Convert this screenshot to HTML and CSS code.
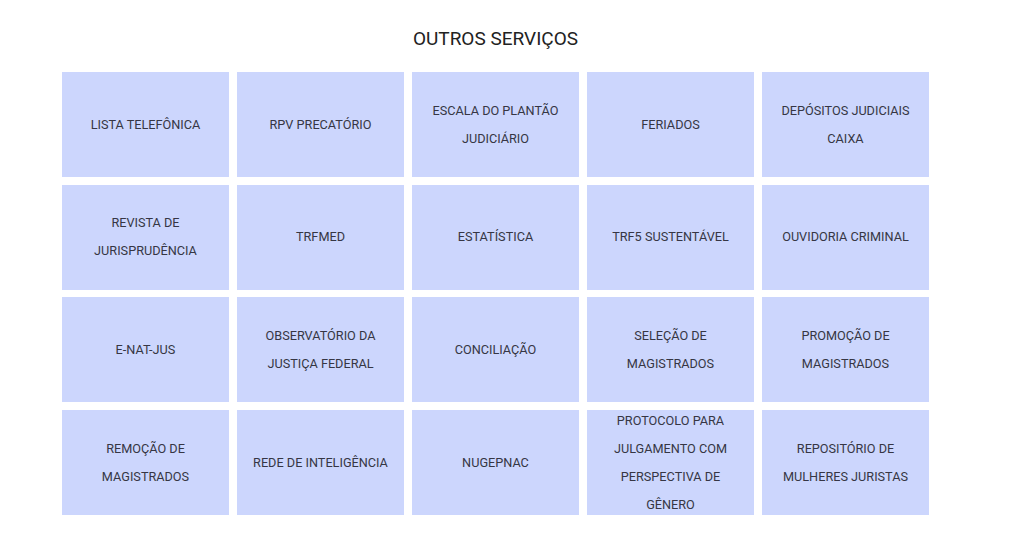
FILE: index.html
```html
<!DOCTYPE html>
<html lang="pt-BR">
<head>
<meta charset="utf-8">
<title>Outros Serviços</title>
<link rel="stylesheet" href="styles.css">
</head>
<body>
<section class="services">
  <h2 class="services-title">OUTROS SERVIÇOS</h2>
  <div class="services-grid">
    <a class="tile" href="#">LISTA TELEFÔNICA</a>
    <a class="tile" href="#">RPV PRECATÓRIO</a>
    <a class="tile" href="#">ESCALA DO PLANTÃO JUDICIÁRIO</a>
    <a class="tile" href="#">FERIADOS</a>
    <a class="tile" href="#">DEPÓSITOS JUDICIAIS CAIXA</a>
    <a class="tile" href="#">REVISTA DE JURISPRUDÊNCIA</a>
    <a class="tile" href="#">TRFMED</a>
    <a class="tile" href="#">ESTATÍSTICA</a>
    <a class="tile" href="#">TRF5 SUSTENTÁVEL</a>
    <a class="tile" href="#">OUVIDORIA CRIMINAL</a>
    <a class="tile" href="#">E-NAT-JUS</a>
    <a class="tile" href="#">OBSERVATÓRIO DA JUSTIÇA FEDERAL</a>
    <a class="tile" href="#">CONCILIAÇÃO</a>
    <a class="tile" href="#">SELEÇÃO DE MAGISTRADOS</a>
    <a class="tile" href="#">PROMOÇÃO DE MAGISTRADOS</a>
    <a class="tile" href="#">REMOÇÃO DE MAGISTRADOS</a>
    <a class="tile" href="#">REDE DE INTELIGÊNCIA</a>
    <a class="tile" href="#">NUGEPNAC</a>
    <a class="tile" href="#">PROTOCOLO PARA JULGAMENTO COM PERSPECTIVA DE GÊNERO</a>
    <a class="tile" href="#">REPOSITÓRIO DE MULHERES JURISTAS</a>
  </div>
</section>
</body>
</html>
```
FILE: styles.css
```css
html, body {
  margin: 0;
  padding: 0;
  background: #ffffff;
}
body {
  font-family: Roboto, "Liberation Sans", Arial, sans-serif;
  color: #333333;
}
.services {
  width: 867px;
  margin-left: 62px;
  padding-top: 27px;
}
.services-title {
  margin: 0 0 21px 0;
  font-size: 19px;
  font-weight: 400;
  line-height: 24px;
  text-align: center;
  color: #222222;
}
.services-grid {
  display: grid;
  grid-template-columns: repeat(5, 167px);
  grid-auto-rows: 105px;
  column-gap: 8px;
  row-gap: 7.7px;
}
.tile {
  display: flex;
  align-items: center;
  justify-content: center;
  padding: 0 14px;
  background: #ccd6fd;
  color: #363644;
  font-size: 12.7px;
  line-height: 28px;
  text-align: center;
  text-decoration: none;
}
```
